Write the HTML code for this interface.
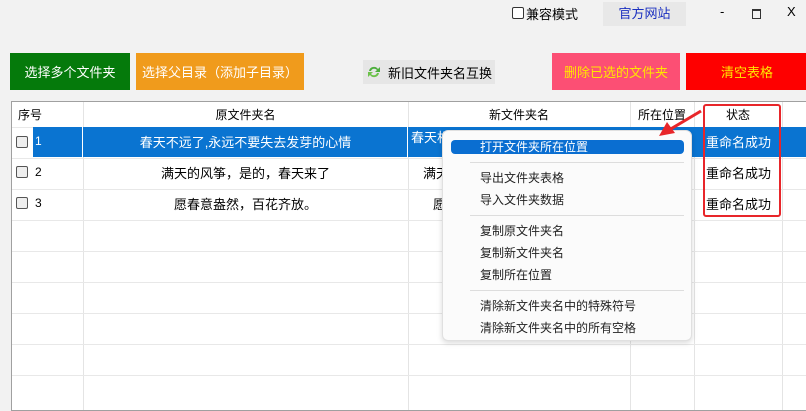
<!DOCTYPE html>
<html><head><meta charset="utf-8"><style>
*{margin:0;padding:0;box-sizing:border-box}
body{width:806px;height:401px;background:#f2f2f2;font-family:"Liberation Sans","Noto Sans CJK SC",sans-serif;font-size:12px;color:#000;position:relative;overflow:hidden}
.a{position:absolute}
.btn{position:absolute;display:flex;align-items:center;justify-content:center;font-size:13px}
.tbl{position:absolute;left:11px;top:101px;width:800px;height:310px;background:#fff;border:1px solid #a0a0a0}
.hl{position:absolute;left:0;right:0;height:1px;background:#e8e8e8}
.vl{position:absolute;top:0;bottom:0;width:1px;background:#e4e4e4}
.cb{position:absolute;width:12px;height:12px;border:1px solid #555;border-radius:2px;background:#eee}
.c{position:absolute;text-align:center;font-size:12px}
.mi{position:absolute;left:480px;font-size:12px;color:#222}
.sep{position:absolute;left:470px;width:214px;height:1px;background:#ddd}
</style></head><body>
<div class="a" style="left:512px;top:7px;width:12px;height:12px;border:1px solid #333;border-radius:2px;background:#fff"></div>
<div class="a" style="left:526px;top:4px;font-size:13px">兼容模式</div>
<div class="a" style="left:603px;top:2px;width:83px;height:24px;background:#e8e8e8;color:#1a2fc0;font-size:13px;text-align:center;line-height:24px">官方网站</div>
<div class="a" style="left:720px;top:4px;font-size:13px">-</div>
<div class="a" style="left:752px;top:9px;width:9px;height:10px;border:1px solid #333;border-top-width:2px"></div>
<div class="a" style="left:787px;top:4px;font-size:13px">X</div>

<div class="btn" style="left:10px;top:53px;width:120px;height:37px;background:#057a0b;color:#fff">选择多个文件夹</div>
<div class="btn" style="left:136px;top:53px;width:168px;height:37px;background:#f09b1c;color:#fff">选择父目录（添加子目录）</div>
<div class="btn" style="left:363px;top:60px;width:132px;height:24px;background:#e6e6e6;color:#000">
<svg width="16" height="14" viewBox="0 0 16 14" style="margin-right:6px"><path d="M3 6 A5 5 0 0 1 12 4 L14 2 L14 7 L9 7 L11 5 A3.5 3.5 0 0 0 5 6 Z" fill="#4cae3c"/><path d="M13 8 A5 5 0 0 1 4 10 L2 12 L2 7 L7 7 L5 9 A3.5 3.5 0 0 0 11 8 Z" fill="#6cc24a"/></svg>新旧文件夹名互换</div>
<div class="btn" style="left:552px;top:53px;width:128px;height:37px;background:#fc4f74;color:#ffe600">删除已选的文件夹</div>
<div class="btn" style="left:686px;top:53px;width:122px;height:37px;background:#fe0000;color:#ffe600">清空表格</div>

<div class="tbl">
<div class="vl" style="left:71px"></div><div class="vl" style="left:396px"></div><div class="vl" style="left:618px"></div><div class="vl" style="left:682px"></div><div class="vl" style="left:770px"></div>
<div class="hl" style="top:25px"></div><div class="hl" style="top:56px"></div><div class="hl" style="top:87px"></div><div class="hl" style="top:118px"></div><div class="hl" style="top:149px"></div><div class="hl" style="top:180px"></div><div class="hl" style="top:211px"></div><div class="hl" style="top:242px"></div><div class="hl" style="top:273px"></div>
</div>
<div class="a" style="left:18px;top:106px">序号</div>
<div class="c" style="left:83px;width:325px;top:106px">原文件夹名</div>
<div class="c" style="left:408px;width:222px;top:106px">新文件夹名</div>
<div class="c" style="left:630px;width:64px;top:106px">所在位置</div>
<div class="c" style="left:694px;width:88px;top:106px">状态</div>

<div class="a" style="left:33px;top:127px;width:773px;height:30px;background:#0a74d1"></div>
<div class="a" style="left:82px;top:127px;width:1px;height:30px;background:#fff"></div>
<div class="a" style="left:407px;top:127px;width:1px;height:30px;background:#fff"></div>
<div class="cb" style="left:16px;top:136px"></div><div class="a" style="left:35px;top:134px;color:#fff">1</div>
<div class="c" style="left:83px;width:325px;top:132px;color:#fff;font-size:13px">春天不远了,永远不要失去发芽的心情</div>
<div class="a" style="left:411px;top:127px;color:#fff;font-size:13px;white-space:nowrap;width:220px;overflow:hidden">春天相同文字不远了,永远不要失去发芽</div>
<div class="cb" style="left:16px;top:166px"></div><div class="a" style="left:35px;top:165px">2</div>
<div class="c" style="left:83px;width:325px;top:163px;font-size:13px">满天的风筝，是的，春天来了</div>
<div class="a" style="left:423px;top:163px;font-size:13px">满天</div>
<div class="cb" style="left:16px;top:197px"></div><div class="a" style="left:35px;top:196px">3</div>
<div class="c" style="left:83px;width:325px;top:194px;font-size:13px">愿春意盎然，百花齐放。</div>
<div class="a" style="left:433px;top:194px;font-size:13px">愿</div>
<div class="a" style="left:706px;top:132px;color:#fff;font-size:13px">重命名成功</div>
<div class="a" style="left:706px;top:163px;font-size:13px">重命名成功</div>
<div class="a" style="left:706px;top:194px;font-size:13px">重命名成功</div>
<div class="a" style="left:703px;top:104px;width:78px;height:113px;border:2px solid #e8262a;border-radius:3px"></div>

<div class="a" style="left:442px;top:130px;width:250px;height:211px;background:#fbfbfb;border:1px solid #e0e0e0;border-radius:6px;box-shadow:0 2px 6px rgba(0,0,0,.15)"></div>
<div class="a" style="left:451px;top:140px;width:233px;height:14px;background:#0a6ed1;border-radius:4px"></div>
<div class="mi" style="top:138px;color:#fff">打开文件夹所在位置</div>
<div class="sep" style="top:162px"></div>
<div class="mi" style="top:169px">导出文件夹表格</div>
<div class="mi" style="top:191px">导入文件夹数据</div>
<div class="sep" style="top:215px"></div>
<div class="mi" style="top:222px">复制原文件夹名</div>
<div class="mi" style="top:244px">复制新文件夹名</div>
<div class="mi" style="top:266px">复制所在位置</div>
<div class="sep" style="top:290px"></div>
<div class="mi" style="top:297px">清除新文件夹名中的特殊符号</div>
<div class="mi" style="top:319px">清除新文件夹名中的所有空格</div>

<svg class="a" style="left:655px;top:108px" width="50" height="32"><line x1="46" y1="3" x2="14" y2="22" stroke="#e8262a" stroke-width="3"/><path d="M4 28 L12 14 L20 25 Z" fill="#e8262a"/></svg>
</body></html>
